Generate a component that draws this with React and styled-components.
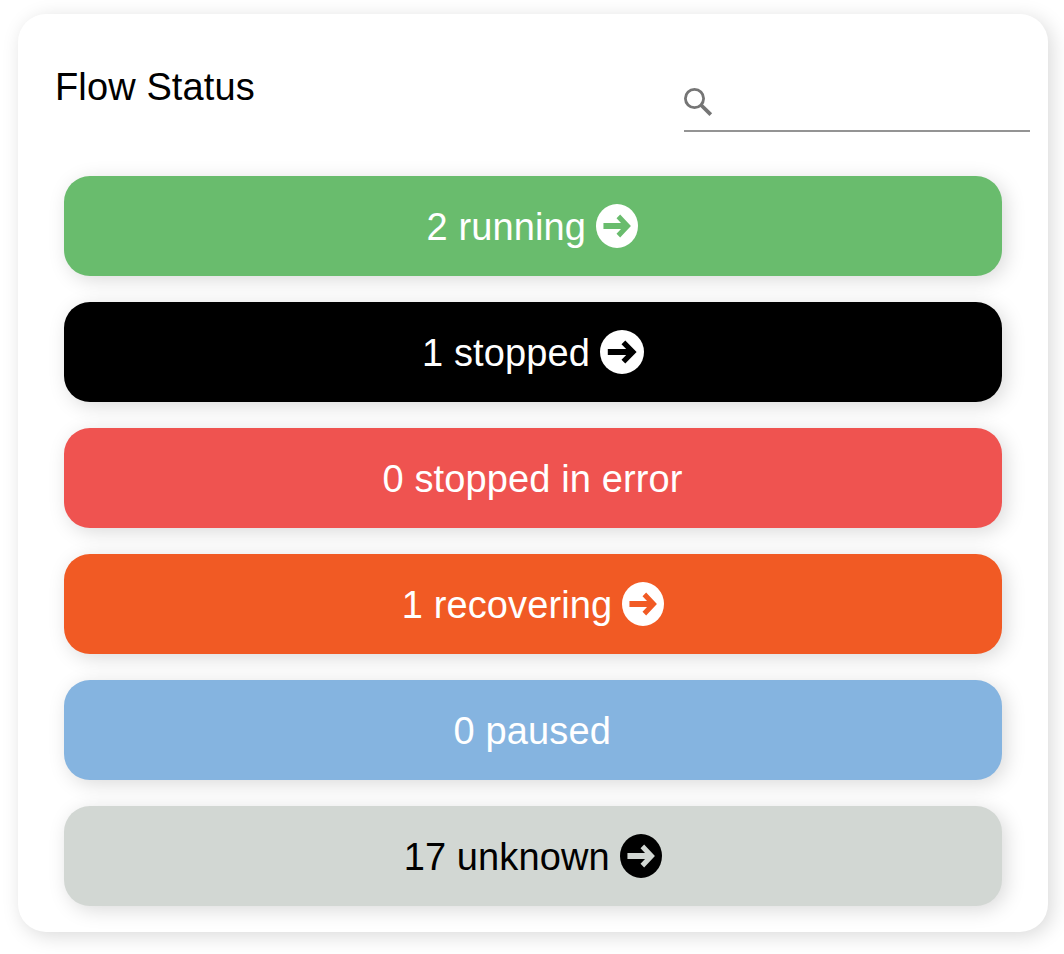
import React from "react";
import styled, { createGlobalStyle } from "styled-components";

const GlobalStyle = createGlobalStyle`
  body { margin: 0; background: #fff; font-family: "Liberation Sans", Arial, sans-serif; }
  * { box-sizing: border-box; }
`;

const Page = styled.div`
  display: flow-root;
  height: 954px;
  overflow: hidden;
`;

const Card = styled.main`
  width: 1030px;
  height: 918px;
  margin: 14px 0 0 18px;
  border-radius: 28px;
  background: #fff;
  box-shadow: 4px 4px 20px rgba(0, 0, 0, 0.15);
`;

const Header = styled.header`
  display: flex;
  justify-content: space-between;
  height: 162px;
  padding: 51px 18px 0 37px;
`;

const Title = styled.h1`
  margin: 0;
  font-size: 38px;
  font-weight: 400;
  line-height: 44px;
  letter-spacing: 0.12px;
  white-space: nowrap;
`;

const Search = styled.label`
  display: flex;
  width: 346px;
  height: 67px;
  padding-top: 20px;
  border-bottom: 2px solid #949494;
`;

const SearchInput = styled.input`
  flex: 1;
  min-width: 0;
  height: 40px;
  border: 0;
  outline: 0;
  background: transparent;
  font: inherit;
  font-size: 30px;
`;

const SearchIcon = styled.svg`
  width: 32px;
  height: 32px;
  fill: none;
  stroke: #757575;
`;

const List = styled.div`
  display: flex;
  flex-direction: column;
  gap: 26px;
  padding: 0 46px;
`;

const StatusButton = styled.button`
  display: flex;
  align-items: center;
  justify-content: center;
  gap: 10px;
  height: 100px;
  padding: 0 ${(p) => p.$inset || 0}px 0 0;
  border: 0;
  border-radius: 26px;
  background: ${(p) => p.$bg};
  color: ${(p) => p.$fg || "#fff"};
  font: 38px/44px "Liberation Sans", Arial, sans-serif;
  letter-spacing: 0.12px;
  box-shadow: 4px 4px 20px rgba(0, 0, 0, 0.15);
`;

const Label = styled.span`
  padding-top: 2px;
`;

const ArrowIcon = styled.svg`
  width: ${(p) => p.$width}px;
  height: 44px;
  fill: currentColor;
`;

const statuses = [
  { text: "2 running", bg: "#69bc6d", icon: 42, inset: 1.5 },
  { text: "1 stopped", bg: "#000", icon: 44 },
  { text: "0 stopped in error", bg: "#ef5350", inset: 1 },
  { text: "1 recovering", bg: "#f15a24", icon: 42 },
  { text: "0 paused", bg: "#85b4e0", inset: 1.5 },
  { text: "17 unknown", bg: "#d2d7d3", fg: "#000", icon: 42, inset: 0.5 },
];

const Arrow = ({ width, cutout }) => (
  <ArrowIcon $width={width} viewBox="0 0 44 44" preserveAspectRatio="none" aria-hidden="true">
    <circle cx="22" cy="22" r="22" />
    <path fill={cutout} d="M7.8 19.1h18.4L21.5 14.2l3.8-3.7L36.6 22 25.3 33.5l-3.8-3.7 4.7-4.9H7.8z" />
  </ArrowIcon>
);

export default function App() {
  return (
    <Page>
      <GlobalStyle />
      <Card>
        <Header>
          <Title>Flow Status</Title>
          <Search>
            <SearchIcon viewBox="0 0 32 32" aria-hidden="true">
              <circle cx="10.5" cy="13.5" r="9.1" strokeWidth="2.8" />
              <path d="M17 20l9.8 9.6" strokeWidth="3.8" />
            </SearchIcon>
            <SearchInput aria-label="Search flows" />
          </Search>
        </Header>
        <List>
          {statuses.map((s) => (
            <StatusButton key={s.text} $bg={s.bg} $fg={s.fg} $inset={s.inset}>
              <Label>{s.text}</Label>
              {s.icon && <Arrow width={s.icon} cutout={s.bg} />}
            </StatusButton>
          ))}
        </List>
      </Card>
    </Page>
  );
}
